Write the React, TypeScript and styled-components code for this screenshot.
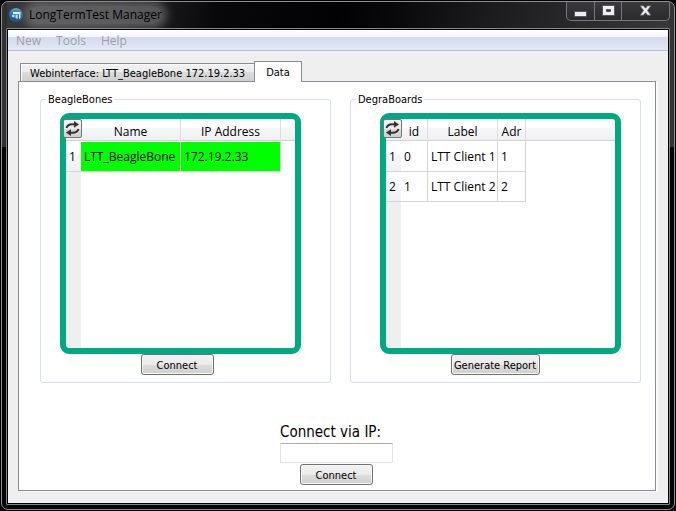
import React from "react";
import styled, { createGlobalStyle } from "styled-components";

const GlobalStyle = createGlobalStyle`
  * { box-sizing: border-box; }
  html, body { margin: 0; background: #000; }
  button, input { font: inherit; color: inherit; }
  body {
    font-family: "DejaVu Sans Condensed", "DejaVu Sans", sans-serif;
    font-size: 11px;
    line-height: 13px;
    color: #000;
  }
`;

const segoe = `"Open Sans", "Noto Sans", sans-serif`;

const Desktop = styled.div`
  display: flex;
  min-height: 100vh;
  padding: 1px;
  background: #000;
`;

const WindowFrame = styled.div`
  flex: 1;
  display: flex;
  flex-direction: column;
  min-width: 0;
  padding: 0 4px 4px;
  border: 1px solid #8f8f91;
  border-radius: 7px;
  background:
    linear-gradient(90deg, #343436 0, #2c2c2e 5px, transparent 5px, transparent calc(100% - 5px), #343436 calc(100% - 5px)) top / 100% 145px no-repeat,
    linear-gradient(100deg, #3a3a3c 0%, #262628 18%, #08080a 32%, #020205 50%, #08080b 58%, #1b1b1e 72%, #39393c 100%) top / 100% 27px no-repeat,
    #050509;
`;

const TitleBar = styled.header`
  display: flex;
  align-items: center;
  gap: 6px;
  height: 26px;
  padding-left: 3px;
`;

const Title = styled.h1`
  flex: 1;
  margin: 0;
  font: 400 12px/18px ${segoe};
  span {
    display: inline-block;
    border-radius: 9px;
    background: rgba(135, 135, 137, 0.55);
    box-shadow: 0 0 8px 5px rgba(135, 135, 137, 0.55);
  }
`;

const Controls = styled.div`
  align-self: flex-start;
  display: flex;
  height: 19px;
  border: 1px solid #77777a;
  border-top: 0;
  border-radius: 0 0 5px 5px;
  background: linear-gradient(#39393c, #2b2b2e);
`;

const ControlButton = styled.button<{ $wide?: boolean }>`
  display: flex;
  align-items: center;
  justify-content: center;
  width: ${(p) => (p.$wide ? 48 : 27)}px;
  padding: 0 0 2px;
  border: 0;
  border-left: 1px solid #77777a;
  background: none;
  &:first-child { border-left: 0; }
`;

const Client = styled.div`
  flex: 1;
  display: flex;
  flex-direction: column;
  border: 1px solid #858587;
  border-radius: 1px;
  padding: 1px;
  background: #000;
`;

const MenuBar = styled.nav`
  display: flex;
  gap: 15px;
  height: 21px;
  padding: 0 8px;
  border-bottom: 1px solid #b6bacf;
  background: linear-gradient(#fff 0, #f3f5fa 7px, #d4daed 7px, #e3e8f6 20px);
`;

const MenuItem = styled.button`
  padding: 1px 0 0;
  border: 0;
  background: none;
  color: #a0a0a4;
  font: 12px/17px ${segoe};
`;

const Main = styled.main`
  flex: 1;
  display: flex;
  flex-direction: column;
  padding: 10px 12px 12px 10px;
  background: #efefef;
`;

const Tabs = styled.div`
  display: flex;
  align-items: flex-end;
  height: 20px;
  padding-left: 2px;
`;

const Tab = styled.button<{ $active?: boolean }>`
  position: relative;
  height: ${(p) => (p.$active ? 21 : 18)}px;
  margin-bottom: ${(p) => (p.$active ? -1 : 0)}px;
  padding: ${(p) => (p.$active ? "0 11px" : "2px 9px 0")};
  border: 1px solid #898c95;
  border-bottom: 0;
  border-right-width: ${(p) => (p.$active ? 1 : 0)}px;
  background: ${(p) =>
    p.$active ? "#fff" : "linear-gradient(#f2f2f2 0, #ebebeb 50%, #dddddd 50%, #cfcfcf 100%)"};
  box-shadow: ${(p) => (p.$active ? "none" : "inset 1px 1px #fbfbfb")};
`;

const Pane = styled.section`
  flex: 1;
  display: flex;
  flex-direction: column;
  border: 1px solid #898c95;
  padding: 11px 14px 5px 21px;
  background: #fff;
  box-shadow: 2px 1px #fbfbfb;
`;

const Groups = styled.div`
  flex: 1;
  display: flex;
  gap: 19px;
`;

const Group = styled.fieldset`
  flex: 1;
  display: flex;
  flex-direction: column;
  align-items: flex-start;
  min-width: 0;
  margin: 0;
  padding: 7px 0;
  border: 1px solid #d5dfe5;
  border-radius: 3px;
`;

const Legend = styled.legend`
  margin-left: 5px;
  padding: 0 2px;
`;

const TableFrame = styled.div<{ $shift?: boolean }>`
  position: relative;
  flex: 1;
  align-self: stretch;
  margin: ${(p) => (p.$shift ? "0 19px 0 29px" : "0 29px 0 19px")};
  border: 6px solid #00a97f;
  border-radius: 9px;
  background:
    linear-gradient(#fff 0, #fff 9px, #f6f7f9 9px, #f0f0f2 21px, #d2d2d4 21px, #d2d2d4 22px, #fff 22px) top / 100% 23px no-repeat,
    linear-gradient(#efefef, #efefef) left / 15px 100% no-repeat,
    #fff;
`;

const RefreshButton = styled.button`
  position: absolute;
  top: 0;
  left: -3px;
  display: flex;
  align-items: center;
  justify-content: center;
  width: 19px;
  height: 19px;
  padding: 0;
  border: 1px solid #777;
  border-radius: 2px;
  background: linear-gradient(#f2f2f2 0, #ebebeb 50%, #dddddd 50%, #cfcfcf 100%);
`;

const Table = styled.table`
  border-collapse: separate;
  border-spacing: 0;
  table-layout: fixed;
  width: 0;
  font: 12px/15px ${segoe};
  th, td { padding: 0; font-weight: 400; white-space: nowrap; }
  thead th { height: 23px; padding-top: 1px; border-right: 1px solid #dcdcdf; }
  thead th:first-child { border-right: 0; }
  tbody th {
    height: 30px;
    padding-right: 2px;
    border-bottom: 1px solid #d5d5d5;
    background: linear-gradient(#fff 0, #fff 12px, #f6f7f9 12px, #f1f1f3 100%);
  }
`;

const Cell = styled.td<{ $ok?: boolean }>`
  && { padding-left: 3px; }
  height: 30px;
  border-right: 1px solid #d5d5d5;
  border-bottom: 1px solid #d5d5d5;
  background: ${(p) => (p.$ok ? "#00ff00" : "#fff")};
`;

const Column = styled.col<{ $w: number }>`
  width: ${(p) => p.$w}px;
`;

const PushButton = styled.button<{ $wide?: boolean }>`
  width: ${(p) => (p.$wide ? 89 : 73)}px;
  height: 21px;
  padding: 1px 1px 0 0;
  border: 1px solid #707070;
  border-radius: 3px;
  background: linear-gradient(#f2f2f2 0, #ebebeb 50%, #dddddd 50%, #cfcfcf 100%);
  box-shadow: inset 0 0 0 1px #f8f8f8;
  white-space: nowrap;
`;

const GroupAction = styled.div`
  margin-left: 100px;
  display: flex;
`;

const IpForm = styled.form`
  align-self: center;
  display: flex;
  flex-direction: column;
  align-items: center;
  width: 113px;
  margin: 39px 8px 0 0;
`;

const IpLabel = styled.label`
  align-self: flex-start;
  margin-bottom: 1px;
  padding-top: 1px;
  font-size: 15px;
  line-height: 19px;
  white-space: nowrap;
`;

const IpInput = styled.input`
  width: 100%;
  height: 20px;
  margin-bottom: 1px;
  padding: 0 3px;
  border: 1px solid #e2e3ea;
  border-top-color: #abadb3;
  border-radius: 1px;
  background: #fff;
`;

const AppIcon = () => (
  <svg width="14" height="14" viewBox="0 0 14 14" aria-hidden="true">
    <defs>
      <linearGradient id="orb" x1="0" y1="0" x2="0" y2="1">
        <stop offset="0" stopColor="#5da5d3" />
        <stop offset="0.5" stopColor="#1d6db0" />
        <stop offset="1" stopColor="#1b4f8b" />
      </linearGradient>
    </defs>
    <circle cx="7" cy="7" r="7" fill="url(#orb)" />
    <path d="M4 4h7.500v6l-1.500 1V6H4z" fill="#e6eff6" />
    <path d="M3 7l2.500-.5V9.500L3 9zM6.500 6.500h2.300V11L6.500 10z" fill="#c5dcec" />
  </svg>
);

const RefreshIcon = () => (
  <svg width="15" height="15" viewBox="0 0 15 15" fill="none" stroke="#333" aria-hidden="true">
    <path d="M1.500 7C2.500 3.800 6 2.800 10 3.500" strokeWidth="2" />
    <path d="M9 0L14 3.600 9 6.800z" fill="#333" stroke="none" />
    <path d="M13.500 8C12.500 11.200 9 12.200 5 11.500" strokeWidth="2" />
    <path d="M6 15L1 11.400 6 8.200z" fill="#333" stroke="none" />
  </svg>
);

const MinimizeIcon = () => (
  <svg width="13" height="15" viewBox="0 0 13 15" aria-hidden="true">
    <rect x="0.500" y="8.500" width="12" height="5" fill="#eee" stroke="#55556a" />
  </svg>
);

const MaximizeIcon = () => (
  <svg width="13" height="11" viewBox="0 0 13 11" aria-hidden="true">
    <path d="M.5.5h12v10H.5zM4.500 4.500h4v2h-4z" fill="#eee" fillRule="evenodd" stroke="#55556a" />
  </svg>
);

const CloseIcon = () => (
  <svg width="13" height="11" viewBox="0 0 13 11" aria-hidden="true">
    <path
      d="M1 .8h3.500l2 2.400 2-2.400H12L8.500 5.500 12 10.200H8.500l-2-2.400-2 2.400H1L4.500 5.500z"
      fill="#eee"
      stroke="#55556a"
      strokeWidth="0.800"
    />
  </svg>
);

interface GridProps {
  columns: { title: string; width: number }[];
  rows: string[][];
  shift?: boolean;
  ok?: boolean;
}

function DeviceTable({ columns, rows, shift, ok }: GridProps) {
  return (
    <TableFrame $shift={shift}>
      <Table>
        <colgroup>
          <Column $w={15} />
          {columns.map((c) => (
            <Column key={c.title} $w={c.width} />
          ))}
        </colgroup>
        <thead>
          <tr>
            <th />
            {columns.map((c) => (
              <th key={c.title} scope="col">{c.title}</th>
            ))}
          </tr>
        </thead>
        <tbody>
          {rows.map((row, i) => (
            <tr key={i}>
              <th scope="row">{i + 1}</th>
              {row.map((value, j) => (
                <Cell key={j} $ok={ok}>{value}</Cell>
              ))}
            </tr>
          ))}
        </tbody>
      </Table>
      <RefreshButton type="button" aria-label="Refresh">
        <RefreshIcon />
      </RefreshButton>
    </TableFrame>
  );
}

export default function App() {
  return (
    <Desktop>
      <GlobalStyle />
      <WindowFrame>
        <TitleBar>
          <AppIcon />
          <Title><span>LongTermTest Manager</span></Title>
          <Controls>
            <ControlButton aria-label="Minimize"><MinimizeIcon /></ControlButton>
            <ControlButton aria-label="Maximize"><MaximizeIcon /></ControlButton>
            <ControlButton aria-label="Close" $wide><CloseIcon /></ControlButton>
          </Controls>
        </TitleBar>
        <Client>
          <MenuBar>
            <MenuItem>New</MenuItem>
            <MenuItem>Tools</MenuItem>
            <MenuItem>Help</MenuItem>
          </MenuBar>
          <Main>
            <Tabs role="tablist">
              <Tab role="tab" aria-selected={false}>Webinterface: LTT_BeagleBone 172.19.2.33</Tab>
              <Tab role="tab" aria-selected $active>Data</Tab>
            </Tabs>
            <Pane role="tabpanel">
              <Groups>
                <Group>
                  <Legend>BeagleBones</Legend>
                  <DeviceTable
                    ok
                    columns={[{ title: "Name", width: 100 }, { title: "IP Address", width: 100 }]}
                    rows={[["LTT_BeagleBone", "172.19.2.33"]]}
                  />
                  <GroupAction>
                    <PushButton type="button">Connect</PushButton>
                  </GroupAction>
                </Group>
                <Group>
                  <Legend>DegraBoards</Legend>
                  <DeviceTable
                    shift
                    columns={[
                      { title: "id", width: 27 },
                      { title: "Label", width: 70 },
                      { title: "Adr", width: 28 },
                    ]}
                    rows={[["0", "LTT Client 1", "1"], ["1", "LTT Client 2", "2"]]}
                  />
                  <GroupAction>
                    <PushButton type="button" $wide>Generate Report</PushButton>
                  </GroupAction>
                </Group>
              </Groups>
              <IpForm onSubmit={(e) => e.preventDefault()}>
                <IpLabel htmlFor="ip">Connect via IP:</IpLabel>
                <IpInput id="ip" type="text" />
                <PushButton type="submit">Connect</PushButton>
              </IpForm>
            </Pane>
          </Main>
        </Client>
      </WindowFrame>
    </Desktop>
  );
}
